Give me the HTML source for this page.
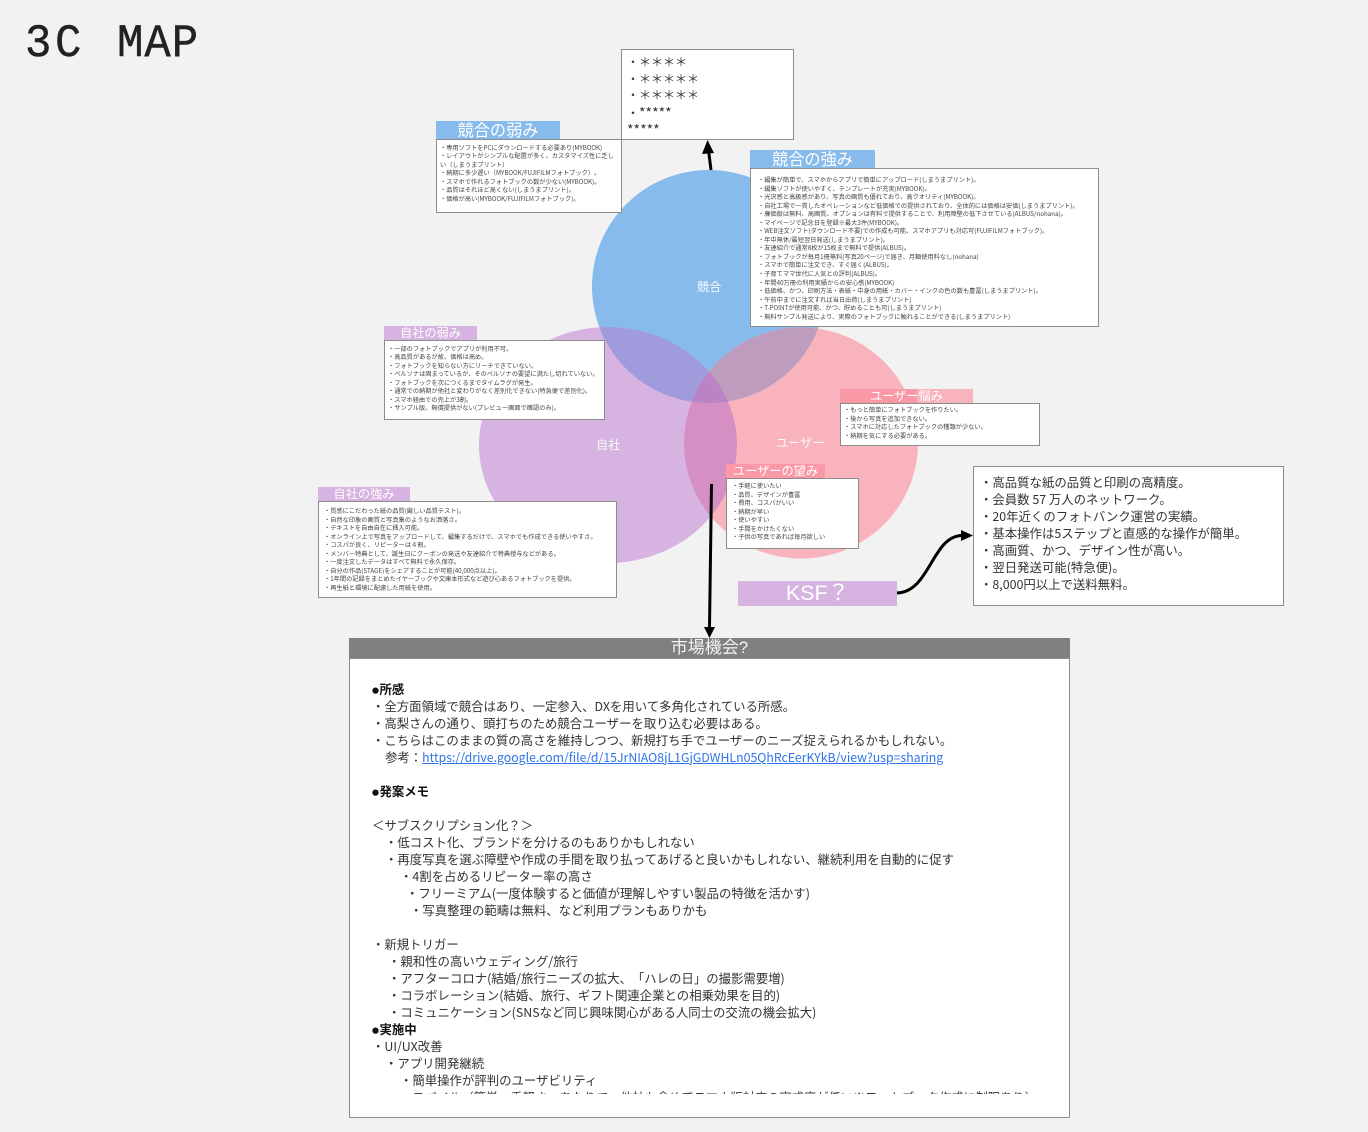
<!DOCTYPE html>
<html lang="ja">
<head>
<meta charset="utf-8">
<title>3C MAP</title>
<style>
html,body{margin:0;padding:0;width:1368px;height:1132px;overflow:hidden;background:#f2f2f2}
body{position:relative;font-family:"Noto Sans CJK JP","Liberation Sans",sans-serif;color:#333;text-spacing-trim:space-all}
svg{position:absolute;left:0;top:0}
.abs{position:absolute}
.box{position:absolute;box-sizing:border-box;background:#fff;border:1.5px solid #8c8c8c;white-space:nowrap;overflow:hidden}
.sm{font-size:6.22px;line-height:8.55px;color:#444;padding:3.5px 0 0 3px}
.hd{position:absolute;color:#fff;text-align:center;white-space:nowrap;overflow:hidden}
.lab{position:absolute;color:#fff;font-size:12.2px;line-height:16px;white-space:nowrap;opacity:.9}
.t{position:absolute;font-family:"Liberation Mono",monospace;font-size:44px;line-height:44px;color:#222;-webkit-text-stroke:.4px #222;transform:scaleY(1.06);transform-origin:0 0}
.mk div{height:17px;line-height:17px;white-space:nowrap}
.mk b{color:#111}
.mk i{display:inline-block;width:7.5px;font-style:normal;font-size:7px;vertical-align:1px}
a{color:#2f74e8}
.ast{font-size:14px;position:relative;top:1px}
</style>
</head>
<body>
<div class="t" style="left:25px;top:21px">3</div>
<div class="t" style="left:55px;top:21px">C</div>
<div class="t" style="left:117px;top:21px;letter-spacing:1px">MAP</div>

<svg width="1368" height="1132" viewBox="0 0 1368 1132">
<defs>
<clipPath id="cb"><ellipse cx="709" cy="286.500" rx="117" ry="116.500"/></clipPath>
<clipPath id="cp"><ellipse cx="608" cy="445" rx="129" ry="118"/></clipPath>
</defs>
<ellipse cx="709" cy="286.500" rx="117" ry="116.500" fill="#86bbec"/>
<ellipse cx="608" cy="445" rx="129" ry="118" fill="#d6b3e0"/>
<ellipse cx="801" cy="443" rx="117" ry="115.500" fill="#f9b3bd"/>
<ellipse cx="608" cy="445" rx="129" ry="118" fill="#a09bdd" clip-path="url(#cb)"/>
<ellipse cx="801" cy="443" rx="117" ry="115.500" fill="#be9cbd" clip-path="url(#cb)"/>
<ellipse cx="801" cy="443" rx="117" ry="115.500" fill="#d68fc3" clip-path="url(#cp)"/>
<g clip-path="url(#cb)"><ellipse cx="801" cy="443" rx="117" ry="115.500" fill="#b983c4" clip-path="url(#cp)"/></g>
</svg>

<div class="lab" style="left:697px;top:278px">競合</div>
<div class="lab" style="left:596px;top:436px">自社</div>
<div class="lab" style="left:776px;top:434px">ユーザー</div>

<div class="box" style="left:621px;top:49px;width:173px;height:91px;font-size:12px;line-height:16.5px;color:#333;padding:4px 0 0 5px">・＊＊＊＊<br>・＊＊＊＊＊<br>・＊＊＊＊＊<br>・<span class="ast">*****</span><br><span class="ast">*****</span></div>

<div class="hd" style="left:436px;top:121px;width:124px;height:18px;background:#86bbec;font-size:16.2px;line-height:17px">競合の弱み</div>
<div class="box sm" style="left:436px;top:139px;width:186px;height:74px">・専用ソフトをPCにダウンロードする必要あり(MYBOOK)<br>・レイアウトがシンプルな配置が多く、カスタマイズ性に乏し<br>い（しまうまプリント）<br>・納期に多少遅い（MYBOOK/FUJIFILMフォトブック）。<br>・スマホで作れるフォトブックの数が少ない(MYBOOK)。<br>・品質はそれほど高くない(しまうまプリント)。<br>・価格が高い(MYBOOK/FUJIFILMフォトブック)。</div>

<div class="hd" style="left:750px;top:150px;width:125px;height:18px;background:#86bbec;font-size:16.2px;line-height:17px">競合の強み</div>
<div class="box sm" style="left:750px;top:168px;width:349px;height:159px;padding:7px 0 0 7px">・編集が簡単で、スマホからアプリで簡単にアップロード(しまうまプリント)。<br>・編集ソフトが使いやすく、テンプレートが充実(MYBOOK)。<br>・光沢感と高級感があり、写真の画質も優れており、高クオリティ(MYBOOK)。<br>・自社工場で一貫したオペレーションなど低価格での提供されており、全体的には価格は安価(しまうまプリント)。<br>・廉価版は無料、高画質、オプションは有料で提供することで、利用障壁の低下させている(ALBUS/nohana)。<br>・マイページで記念日を登録※最大3件(MYBOOK)。<br>・WEB注文ソフト(ダウンロード不要)での作成も可能、スマホアプリも対応可(FUJIFILMフォトブック)。<br>・年中無休/最短翌日発送(しまうまプリント)。<br>・友達紹介で通常8枚が15枚まで無料で提供(ALBUS)。<br>・フォトブックが毎月1冊無料(写真20ページ)で届き、月額使用料なし(nohana)<br>・スマホで簡単に注文でき、すぐ届く(ALBUS)。<br>・子育てママ世代に人気との評判(ALBUS)。<br>・年間40万冊の利用実績からの安心感(MYBOOK)<br>・低価格、かつ、印刷方法・表紙・中身の用紙・カバー・インクの色の数も豊富(しまうまプリント)。<br>・午前中までに注文すれば当日出荷(しまうまプリント)<br>・T-POINTが使用可能、かつ、貯めることも可(しまうまプリント)<br>・無料サンプル発送により、実際のフォトブックに触れることができる(しまうまプリント)</div>

<div class="hd" style="left:384px;top:326px;width:93px;height:14px;background:#d6b3e0;font-size:12.2px;line-height:13px">自社の弱み</div>
<div class="box sm" style="left:384px;top:340px;width:221px;height:80px;padding:3.500px 0 0 3px">・一部のフォトブックでアプリが利用不可。<br>・高品質があるが故、価格は高め。<br>・フォトブックを知らない方にリーチできていない。<br>・ペルソナは固まっているが、そのペルソナの要望に満たし切れていない。<br>・フォトブックを次につくるまでタイムラグが発生。<br>・通常での納期が他社と変わりがなく差別化できない(特急便で差別化)。<br>・スマホ経由での売上が3割。<br>・サンプル版、無償提供がない(プレビュー画面で確認のみ)。</div>

<div class="hd" style="left:318px;top:487px;width:92px;height:14px;background:#d6b3e0;font-size:12.2px;line-height:13px">自社の強み</div>
<div class="box sm" style="left:318px;top:501px;width:299px;height:97px;padding:5px 0 0 5px">・質感にこだわった紙の品質(厳しい品質テスト)。<br>・自然な印象の画質と写真集のようなお洒落さ。<br>・テキストを自由自在に挿入可能。<br>・オンライン上で写真をアップロードして、編集するだけで、スマホでも作成できる使いやすさ。<br>・コスパが良く、リピーターは４割。<br>・メンバー特典として、誕生日にクーポンの発送や友達紹介で特典授与などがある。<br>・一度注文したデータはすべて無料で永久保存。<br>・自分の作品(STAGE)をシェアすることが可能(40,000点以上)。<br>・1年間の記録をまとめたイヤーブックや文庫本形式など遊び心あるフォトブックを提供。<br>・再生紙と環境に配慮した用紙を使用。</div>

<div class="hd" style="left:840px;top:389px;width:133px;height:14px;background:#f9b3bd;font-size:12.2px;line-height:13px"><span class="abs" style="left:0;top:0;width:77px;height:14px;background:#fb98a6"></span><span style="position:relative">ユーザー悩み</span></div>
<div class="box sm" style="left:840px;top:403px;width:200px;height:43px;padding:2px 0 0 3px">・もっと簡単にフォトブックを作りたい。<br>・後から写真を追加できない。<br>・スマホに対応したフォトブックの種類が少ない。<br>・納期を気にする必要がある。</div>

<div class="hd" style="left:726px;top:464px;width:99px;height:14px;background:#fb98a6;font-size:12.2px;line-height:13px">ユーザーの望み</div>
<div class="box sm" style="left:726px;top:478px;width:133px;height:71px;padding:3px 0 0 5px">・手軽に使いたい<br>・品質、デザインが豊富<br>・費用、コスパがいい<br>・納期が早い<br>・使いやすい<br>・手間をかけたくない<br>・子供の写真であれば毎月欲しい</div>

<div class="hd" style="left:738px;top:581px;width:159px;height:25px;background:#d6b3e0;font-family:'Liberation Sans','Noto Sans CJK JP',sans-serif;font-size:21.5px;line-height:24px">KSF？</div>

<div class="box" style="left:973px;top:466px;width:311px;height:140px;font-size:12.4px;line-height:17px;color:#333;padding:7px 0 0 6px">・高品質な紙の品質と印刷の高精度。<br>・会員数 57 万人のネットワーク。<br>・20年近くのフォトバンク運営の実績。<br>・基本操作は5ステップと直感的な操作が簡単。<br>・高画質、かつ、デザイン性が高い。<br>・翌日発送可能(特急便)。<br>・8,000円以上で送料無料。</div>

<div class="hd" style="left:349px;top:638px;width:721px;height:20px;background:#808080;font-family:'Liberation Sans','Noto Sans CJK JP',sans-serif;font-size:17px;line-height:19px;color:#f4f4f4">市場機会?</div>
<div class="box" style="left:349px;top:658px;width:721px;height:460px"></div>
<div class="abs mk" style="left:372px;top:681px;width:680px;height:413px;overflow:hidden;font-size:12.4px;color:#333">
<div><b><i>●</i>所感</b></div>
<div>・全方面領域で競合はあり、一定参入、DXを用いて多角化されている所感。</div>
<div>・高梨さんの通り、頭打ちのため競合ユーザーを取り込む必要はある。</div>
<div>・こちらはこのままの質の高さを維持しつつ、新規打ち手でユーザーのニーズ捉えられるかもしれない。</div>
<div style="padding-left:13px">参考：<a href="#" style="font-size:12.3px">https://drive.google.com/file/d/15JrNIAO8jL1GjGDWHLn05QhRcEerKYkB/view?usp=sharing</a></div>
<div></div>
<div><b><i>●</i>発案メモ</b></div>
<div></div>
<div>＜サブスクリプション化？＞</div>
<div style="padding-left:13px">・低コスト化、ブランドを分けるのもありかもしれない</div>
<div style="padding-left:13px">・再度写真を選ぶ障壁や作成の手間を取り払ってあげると良いかもしれない、継続利用を自動的に促す</div>
<div style="padding-left:28px">・4割を占めるリピーター率の高さ</div>
<div style="padding-left:34px">・フリーミアム(一度体験すると価値が理解しやすい製品の特徴を活かす)</div>
<div style="padding-left:38px">・写真整理の範疇は無料、など利用プランもありかも</div>
<div></div>
<div>・新規トリガー</div>
<div style="padding-left:16px">・親和性の高いウェディング/旅行</div>
<div style="padding-left:16px">・アフターコロナ(結婚/旅行ニーズの拡大、「ハレの日」の撮影需要増)</div>
<div style="padding-left:16px">・コラボレーション(結婚、旅行、ギフト関連企業との相乗効果を目的)</div>
<div style="padding-left:16px">・コミュニケーション(SNSなど同じ興味関心がある人同士の交流の機会拡大)</div>
<div><b><i>●</i>実施中</b></div>
<div>・UI/UX改善</div>
<div style="padding-left:13px">・アプリ開発継続</div>
<div style="padding-left:28px">・簡単操作が評判のユーザビリティ</div>
<div style="padding-left:28px;font-size:12.27px">・モバイル（簡単、手軽さ、あたりで、他社も含めてスマホ版対応の完成度が低い※フォトブック作成に制限あり）</div>
</div>

<svg width="1368" height="1132" viewBox="0 0 1368 1132" style="pointer-events:none">
<path d="M711 170 L708.500 150" fill="none" stroke="#000" stroke-width="3"/>
<path d="M707.500 140 L714 153 L702 154 Z" fill="#000"/>
<path d="M711.500 484 L709.500 628" fill="none" stroke="#000" stroke-width="3"/>
<path d="M709.500 638 L704 627 L715 627 Z" fill="#000"/>
<path d="M897 593 C930 592 932 536 962 535.500" fill="none" stroke="#000" stroke-width="3"/>
<path d="M973 535.500 L961 530 L961 541 Z" fill="#000"/>
</svg>
</body>
</html>
